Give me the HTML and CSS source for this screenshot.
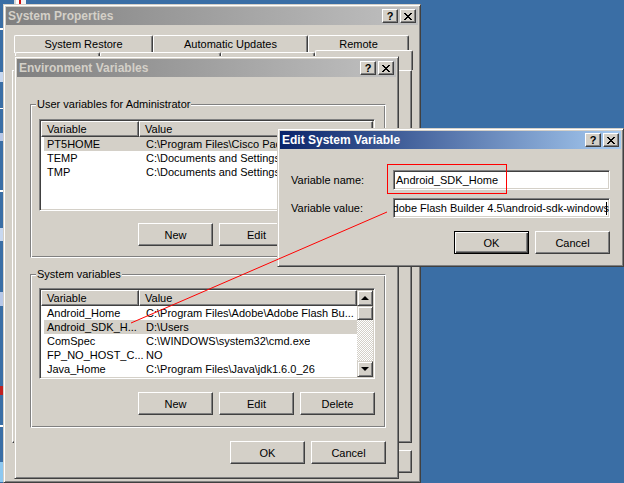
FILE: index.html
```html
<!DOCTYPE html>
<html lang="en">
<head>
    <meta charset="UTF-8">
    <title>System Properties - Environment Variables</title>
    <link rel="stylesheet" href="styles.css">
</head>
<body>
    <div class="desktop">
        <!-- bits of desktop icons peeking out on the left -->
        <div class="bit bit-top"></div>
        <div class="bit b1"></div>
        <div class="bit b2"></div>
        <div class="bit b3"></div>
        <div class="bit b4"></div>
        <div class="bit b5"></div>
        <div class="bit b6"></div>
        <div class="bit b7"></div>
        <div class="bit b8"></div>
        <div class="bit b9"></div>
        <div class="bit b10"></div>

        <!-- System Properties (behind) -->
        <div class="window sysprops">
            <div class="titlebar">
                <span class="title">System Properties</span>
                <div class="caption-btns">
                    <button class="cap-btn">?</button>
                    <button class="cap-btn"><svg width="8" height="7" viewBox="0 0 8 7"><path d="M0 0h2v1H0zM6 0h2v1H6zM1 1h2v1H1zM5 1h2v1H5zM2 2h4v1H2zM3 3h2v1H3zM2 4h4v1H2zM1 5h2v1H1zM5 5h2v1H5zM0 6h2v1H0zM6 6h2v1H6z" fill="#000"/></svg></button>
                </div>
            </div>
            <div class="sp-body">
                <div class="tabs back">
                    <div class="tab t-restore">System Restore</div>
                    <div class="tab t-updates">Automatic Updates</div>
                    <div class="tab t-remote">Remote</div>
                </div>
                <!-- front row of tabs, covered by the Environment Variables dialog -->
                <div class="tabs front">
                    <div class="tab t-general"></div>
                    <div class="tab t-name"></div>
                    <div class="tab t-hardware"></div>
                    <div class="tab t-advanced"></div>
                </div>
                <div class="tab-panel"></div>
                <div class="btn-row">
                    <button class="btn">OK</button>
                    <button class="btn">Cancel</button>
                    <button class="btn">Apply</button>
                </div>
            </div>
        </div>

        <!-- Environment Variables -->
        <div class="window envvars">
            <div class="titlebar">
                <span class="title">Environment Variables</span>
                <div class="caption-btns">
                    <button class="cap-btn">?</button>
                    <button class="cap-btn"><svg width="8" height="7" viewBox="0 0 8 7"><path d="M0 0h2v1H0zM6 0h2v1H6zM1 1h2v1H1zM5 1h2v1H5zM2 2h4v1H2zM3 3h2v1H3zM2 4h4v1H2zM1 5h2v1H1zM5 5h2v1H5zM0 6h2v1H0zM6 6h2v1H6z" fill="#000"/></svg></button>
                </div>
            </div>
            <div class="env-body">
                <fieldset class="group user">
                    <legend>User variables for Administrator</legend>
                    <div class="listview user-list">
                        <div class="lv-main">
                            <div class="lv-header">
                                <div class="lv-col col-var">Variable</div>
                                <div class="lv-col col-val">Value</div>
                            </div>
                            <div class="lv-row selected"><span class="cell-var">PT5HOME</span><span class="cell-val">C:\Program Files\Cisco Packet Tracer 5.3</span></div>
                            <div class="lv-row"><span class="cell-var">TEMP</span><span class="cell-val">C:\Documents and Settings\Administrator\Local Settings\Temp</span></div>
                            <div class="lv-row"><span class="cell-var">TMP</span><span class="cell-val">C:\Documents and Settings\Administrator\Local Settings\Temp</span></div>
                        </div>
                    </div>
                    <div class="group-btns">
                        <button class="btn">New</button>
                        <button class="btn">Edit</button>
                        <button class="btn">Delete</button>
                    </div>
                </fieldset>

                <fieldset class="group sys">
                    <legend>System variables</legend>
                    <div class="listview sys-list">
                        <div class="lv-main">
                            <div class="lv-header">
                                <div class="lv-col col-var">Variable</div>
                                <div class="lv-col col-val">Value</div>
                            </div>
                            <div class="lv-row"><span class="cell-var">Android_Home</span><span class="cell-val">C:\Program Files\Adobe\Adobe Flash Bu...</span></div>
                            <div class="lv-row selected"><span class="cell-var">Android_SDK_H...</span><span class="cell-val">D:\Users</span></div>
                            <div class="lv-row"><span class="cell-var">ComSpec</span><span class="cell-val">C:\WINDOWS\system32\cmd.exe</span></div>
                            <div class="lv-row"><span class="cell-var">FP_NO_HOST_C...</span><span class="cell-val">NO</span></div>
                            <div class="lv-row"><span class="cell-var">Java_Home</span><span class="cell-val">C:\Program Files\Java\jdk1.6.0_26</span></div>
                        </div>
                        <div class="scrollbar">
                            <div class="sb-btn"><span class="arrow up"></span></div>
                            <div class="sb-thumb"></div>
                            <div class="sb-track"></div>
                            <div class="sb-btn"><span class="arrow down"></span></div>
                        </div>
                    </div>
                    <div class="group-btns">
                        <button class="btn">New</button>
                        <button class="btn">Edit</button>
                        <button class="btn">Delete</button>
                    </div>
                </fieldset>

                <div class="btn-row">
                    <button class="btn">OK</button>
                    <button class="btn">Cancel</button>
                </div>
            </div>
        </div>

        <!-- Edit System Variable (active) -->
        <div class="window editvar">
            <div class="titlebar active">
                <span class="title">Edit System Variable</span>
                <div class="caption-btns">
                    <button class="cap-btn">?</button>
                    <button class="cap-btn"><svg width="8" height="7" viewBox="0 0 8 7"><path d="M0 0h2v1H0zM6 0h2v1H6zM1 1h2v1H1zM5 1h2v1H5zM2 2h4v1H2zM3 3h2v1H3zM2 4h4v1H2zM1 5h2v1H1zM5 5h2v1H5zM0 6h2v1H0zM6 6h2v1H6z" fill="#000"/></svg></button>
                </div>
            </div>
            <div class="ev-body">
                <div class="ev-row">
                    <label class="ev-label">Variable name:</label>
                    <div class="ev-input">Android_SDK_Home</div>
                </div>
                <div class="ev-row">
                    <label class="ev-label">Variable value:</label>
                    <div class="ev-input value"><span>C:\Program Files\Adobe\Adobe Flash Builder 4.5\android-sdk-windows</span><span class="caret"></span></div>
                </div>
                <div class="btn-row">
                    <button class="btn default">OK</button>
                    <button class="btn">Cancel</button>
                </div>
            </div>
        </div>

        <!-- red annotations drawn over the screenshot -->
        <div class="mark-box"></div>
        <svg class="mark-line" width="624" height="483"><line x1="387" y1="212" x2="131" y2="323" stroke="#ff0000" stroke-width="1"/></svg>
    </div>
</body>
</html>
```

FILE: styles.css
```css
body {
    margin: 0;
    background: #3a6ea5;
    font-family: 'Liberation Sans', Arial, sans-serif;
    font-size: 11px;
    color: #000;
}

.desktop {
    position: relative;
    width: 624px;
    height: 483px;
    overflow: hidden;
}

/* desktop icon fragments */
.bit {
    position: absolute;
    left: 0;
    width: 3px;
    background: #fff;
}

.bit-top {
    left: 14px;
    top: 0;
    width: 10px;
    height: 4px;
    background: #f4f4f4;
    border-left: 2px solid #d8d8d8;
    box-shadow: inset 3px 0 #fff, inset 5px 0 #d01010;
}

.b1 { top: 28px; height: 2px; }
.b2 { top: 72px; height: 10px; background: #c8d8f0; }
.b3 { top: 108px; height: 1px; }
.b4 { top: 133px; height: 8px; background: #b8c8e8; }
.b5 { top: 190px; height: 2px; }
.b6 { top: 228px; height: 13px; background: #c8d8f0; }
.b7 { top: 292px; height: 14px; background: #b8c8e8; }
.b8 { top: 386px; height: 9px; background: #c02020; }
.b9 { top: 425px; height: 2px; }
.b10 { top: 462px; height: 20px; background: #8ec8f0; }

/* classic window frame */
.window {
    position: absolute;
    box-sizing: border-box;
    display: flex;
    flex-direction: column;
    background: #d4d0c8;
    border: 1px solid;
    border-color: #d4d0c8 #404040 #404040 #d4d0c8;
    box-shadow: inset 1px 1px #fff, inset -1px -1px #808080;
    padding: 2px;
}

.sysprops {
    left: 3px;
    top: 4px;
    width: 418px;
    height: 479px;
}

.envvars {
    left: 14px;
    top: 56px;
    width: 385px;
    height: 423px;
}

.editvar {
    left: 277px;
    top: 128px;
    width: 347px;
    height: 139px;
}

.titlebar {
    display: flex;
    align-items: center;
    height: 18px;
    flex: none;
    padding: 0 2px;
    background: linear-gradient(to right, #808080, #c0c0c0);
    color: #d4d0c8;
    font-size: 12px;
    font-weight: bold;
}

.titlebar.active {
    background: linear-gradient(to right, #0a246a, #a6caf0);
    color: #fff;
}

.caption-btns {
    margin-left: auto;
    display: flex;
    gap: 2px;
}

.cap-btn {
    box-sizing: border-box;
    width: 16px;
    height: 14px;
    padding: 0;
    display: flex;
    align-items: center;
    justify-content: center;
    background: #d4d0c8;
    border: 1px solid;
    border-color: #fff #404040 #404040 #fff;
    box-shadow: inset -1px -1px #808080;
    font-family: 'Liberation Sans', Arial, sans-serif;
    font-size: 11px;
    font-weight: bold;
    color: #000;
}

/* buttons */
.btn {
    box-sizing: border-box;
    width: 75px;
    height: 23px;
    padding: 0;
    background: #d4d0c8;
    border: 1px solid;
    border-color: #fff #404040 #404040 #fff;
    box-shadow: inset -1px -1px #808080;
    font-family: 'Liberation Sans', Arial, sans-serif;
    font-size: 11px;
    color: #000;
}

.btn.default {
    border-color: #000;
    box-shadow: inset 1px 1px #fff, inset -1px -1px #404040, inset -2px -2px #808080;
}

.btn-row {
    display: flex;
    justify-content: flex-end;
    gap: 6px;
}

/* System Properties */
.sp-body {
    padding: 10px 6px 0;
    display: flex;
    flex-direction: column;
}

.tabs {
    display: flex;
}

.tabs.back {
    height: 17px;
    padding-left: 2px;
}

.tabs.front {
    height: 18px;
    padding-left: 3px;
}

.tab {
    box-sizing: border-box;
    height: 18px;
    flex: none;
    background: #d4d0c8;
    border-top: 1px solid #fff;
    border-left: 1px solid #fff;
    border-right: 1px solid #404040;
    box-shadow: inset -1px 0 #808080;
    border-radius: 2px 2px 0 0;
    text-align: center;
    line-height: 17px;
}

.t-restore { width: 139px; }
.t-updates { width: 155px; }
.t-remote { width: 101px; }
.t-general { width: 85px; }
.t-name { width: 121px; }
.t-hardware { width: 94px; }

.t-advanced {
    width: 98px;
    height: 20px;
    margin-top: -2px;
}

.tab-panel {
    box-sizing: border-box;
    height: 373px;
    border: 1px solid;
    border-color: #fff #404040 #404040 #fff;
    box-shadow: inset -1px -1px #808080;
}

.sp-body .btn-row {
    margin-top: 7px;
}

/* Environment Variables */
.env-body {
    padding: 0 10px 0 13px;
}

.group {
    min-width: 0;
    margin: 21px 0 0;
    padding: 8px 10px 11px 8px;
    border: 1px solid;
    border-color: #808080 #fff #fff #808080;
    box-shadow: inset 1px 1px #fff, inset -1px -1px #808080;
}

.group.sys {
    margin-top: 10px;
    padding-top: 7px;
    padding-bottom: 12px;
}

.group legend {
    margin-left: -3px;
    padding: 0 1px;
    background: #d4d0c8;
    line-height: 13px;
}

.group-btns {
    display: flex;
    justify-content: flex-end;
    gap: 6px;
    margin-top: 12px;
}

.group.sys .group-btns {
    margin-top: 13px;
}

.env-body > .btn-row {
    margin-top: 13px;
}

/* list view */
.listview {
    box-sizing: border-box;
    display: flex;
    padding: 1px;
    background: #fff;
    border: 1px solid;
    border-color: #808080 #fff #fff #808080;
    box-shadow: inset 1px 1px #404040, inset -1px -1px #d4d0c8;
    overflow: hidden;
}

.user-list {
    height: 92px;
}

.sys-list {
    height: 91px;
}

.lv-main {
    flex: 1;
    min-width: 0;
    overflow: hidden;
}

.lv-header {
    display: flex;
    height: 16px;
}

.lv-col {
    box-sizing: border-box;
    padding-left: 5px;
    background: #d4d0c8;
    border: 1px solid;
    border-color: #fff #404040 #404040 #fff;
    box-shadow: inset -1px -1px #808080;
    line-height: 14px;
    white-space: nowrap;
}

.col-var {
    width: 98px;
    flex: none;
}

.col-val {
    flex: 1;
}

.lv-row {
    display: flex;
    height: 14px;
    line-height: 14px;
    margin-left: 3px;
    white-space: nowrap;
}

.lv-row.selected {
    background: #d4d0c8;
}

.cell-var {
    box-sizing: border-box;
    width: 102px;
    flex: none;
    padding-left: 3px;
    overflow: hidden;
}

.cell-val {
    overflow: hidden;
}

.scrollbar {
    width: 16px;
    flex: none;
    display: flex;
    flex-direction: column;
}

.sb-btn,
.sb-thumb {
    box-sizing: border-box;
    flex: none;
    display: flex;
    align-items: center;
    justify-content: center;
    background: #d4d0c8;
    border: 1px solid;
    border-color: #d4d0c8 #404040 #404040 #d4d0c8;
    box-shadow: inset 1px 1px #fff, inset -1px -1px #808080;
}

.sb-btn {
    height: 16px;
}

.sb-thumb {
    height: 14px;
}

.sb-track {
    flex: 1;
    background: repeating-conic-gradient(#fff 0 25%, #d4d0c8 0 50%) 0 0 / 2px 2px;
}

.arrow {
    width: 0;
    height: 0;
    border-left: 4px solid transparent;
    border-right: 4px solid transparent;
}

.arrow.up {
    border-bottom: 4px solid #000;
    margin-top: -1px;
}

.arrow.down {
    border-top: 4px solid #000;
}

/* Edit System Variable */
.ev-body {
    padding: 21px 11px 0 11px;
    display: flex;
    flex-direction: column;
    gap: 8px;
}

.ev-row {
    display: flex;
    align-items: center;
    height: 20px;
}

.ev-label {
    width: 102px;
    flex: none;
}

.ev-input {
    box-sizing: border-box;
    width: 217px;
    height: 20px;
    padding: 0 2px;
    background: #fff;
    border: 1px solid;
    border-color: #808080 #fff #fff #808080;
    box-shadow: inset 1px 1px #404040, inset -1px -1px #d4d0c8;
    line-height: 18px;
    white-space: nowrap;
    overflow: hidden;
}

.ev-input.value {
    display: flex;
    justify-content: flex-end;
    padding-right: 2px;
}

.ev-input.value span {
    flex: none;
}

.caret {
    width: 1px;
    height: 13px;
    margin: 3px 0 0 -3px;
    background: #000;
}

.ev-body .btn-row {
    margin-top: 5px;
}

/* annotations */
.mark-box {
    position: absolute;
    left: 387px;
    top: 164px;
    width: 118px;
    height: 28px;
    border: 1px solid #f00;
}

.mark-line {
    position: absolute;
    left: 0;
    top: 0;
    pointer-events: none;
}
```
